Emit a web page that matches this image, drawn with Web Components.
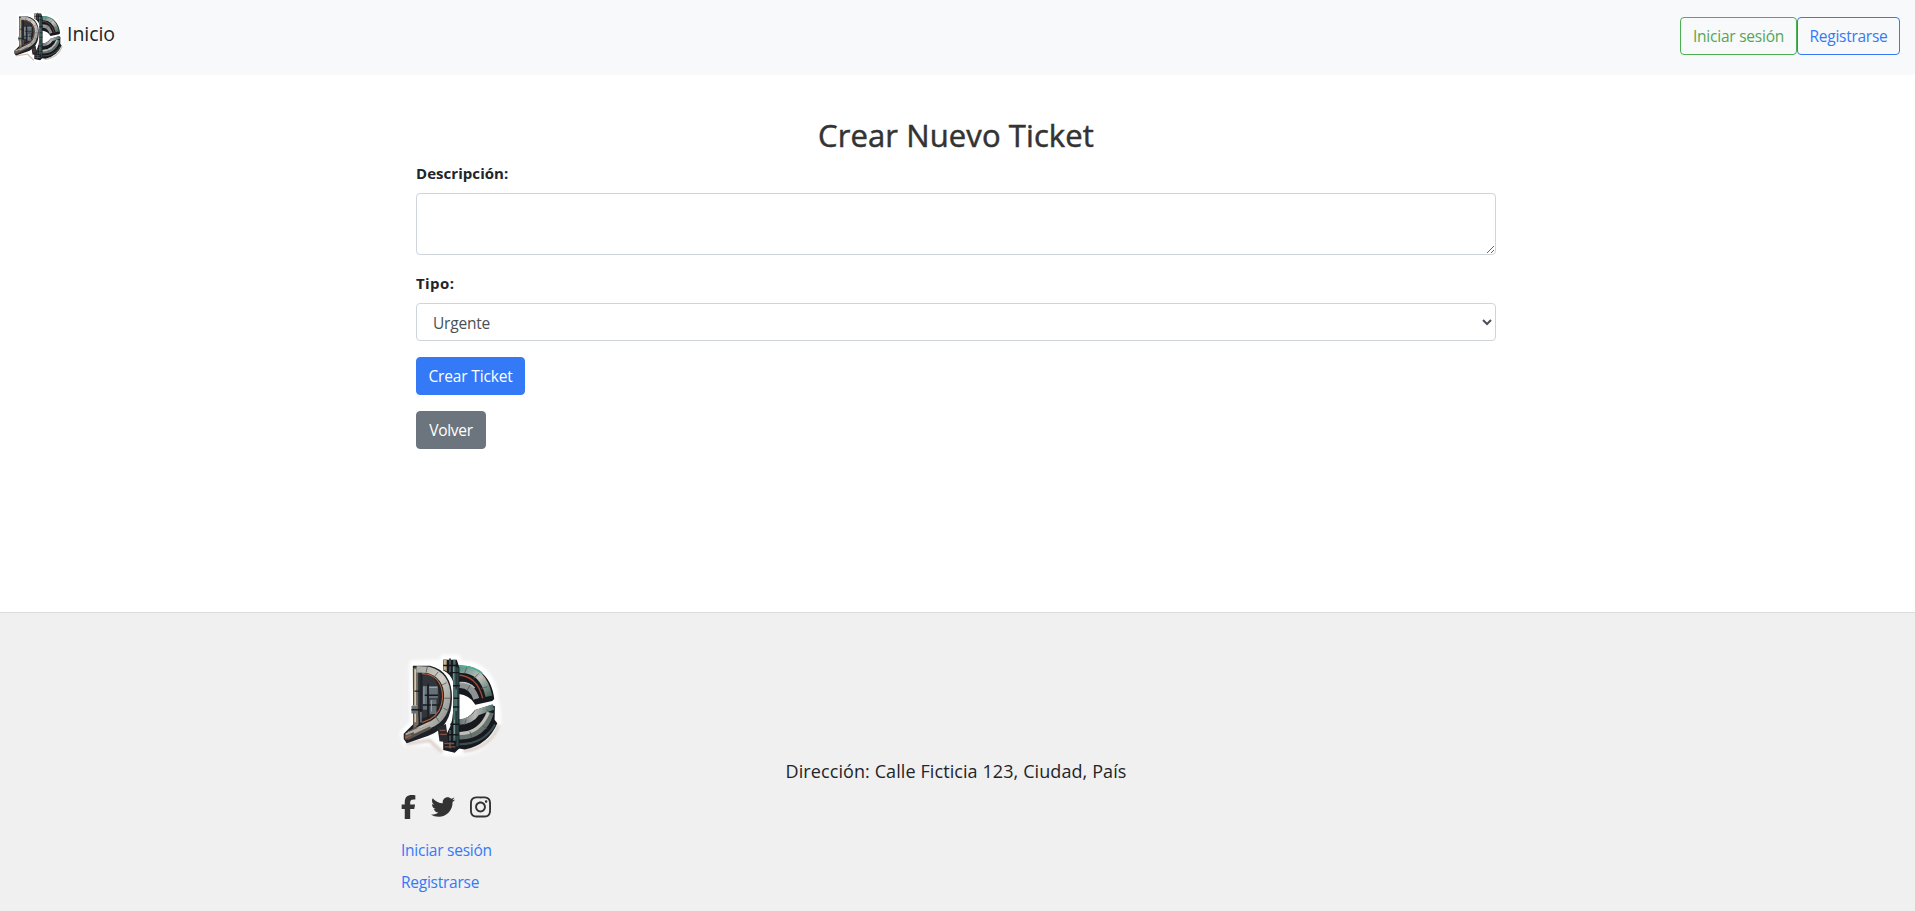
<!DOCTYPE html>
<html lang="es">
<head>
<meta charset="utf-8">
<title>Crear Nuevo Ticket</title>
<style>
body{margin:0;background:#fff;color:#212529;font:400 15.5px/24px "Open Sans","Noto Sans",sans-serif;overflow:hidden}
</style>
</head>
<body>
<ticket-page></ticket-page>
<script>
function define(name, html, setup) {
  customElements.define(name, class extends HTMLElement {
    constructor() {
      super();
      this.attachShadow({mode: "open"}).innerHTML = html;
    }
    connectedCallback() { if (setup) setup(this); }
  });
}

define("dc-logo", `
<style>:host{display:block;width:var(--size,100px);height:var(--size,100px);flex:none}svg{display:block;width:100%;height:100%;overflow:visible}</style>
<svg viewBox="20 30 296 296">
<defs>
<linearGradient id="steel" x1="0" y1="0" x2="1" y2="1"><stop offset="0" stop-color="#a3a49f"/><stop offset=".5" stop-color="#cfcdc6"/><stop offset="1" stop-color="#7c827f"/></linearGradient>
<linearGradient id="arc" x1="0" y1="0" x2="1" y2="1"><stop offset="0" stop-color="#5f9388"/><stop offset=".5" stop-color="#c2c3bc"/><stop offset="1" stop-color="#49695f"/></linearGradient>
<linearGradient id="low" x1="0" y1="0" x2="1" y2="0"><stop offset="0" stop-color="#59656a"/><stop offset=".5" stop-color="#b9b9b5"/><stop offset="1" stop-color="#466b66"/></linearGradient>
<filter id="soft" x="-20%" y="-20%" width="140%" height="140%"><feGaussianBlur stdDeviation="4"/></filter>
</defs>
<path d="M53 55L142 51L145 38H188L193 56C250 50 296 90 300 164L306 184L308 230C286 300 230 332 145 318L118 290L34 292L25 262L55 232Z" fill="#fff" stroke="#fff" stroke-width="17" stroke-linejoin="round" filter="url(#soft)"/>
<path d="M205 315Q285 305 309 237M36 293L105 283L142 318" fill="none" stroke="#a58b7d" stroke-width="8" opacity=".5" filter="url(#soft)"/>
<path d="M186 62C244 56 290 95 296 160L290 166L240 177Q226 150 188 145Z" fill="#17181d"/>
<path d="M189 74Q262 68 280 152" fill="none" stroke="url(#arc)" stroke-width="20"/>
<path d="M188 90Q244 90 262 158" fill="none" stroke="#a04a34" stroke-width="4"/>
<path d="M190 64Q232 60 260 84" fill="none" stroke="#53ad99" stroke-width="5"/>
<path d="M191 119Q229 117 243 160" fill="none" stroke="#8d9294" stroke-width="18"/>
<path d="M190 112Q220 108 238 128" fill="none" stroke="#c3c0ba" stroke-width="4"/>
<path d="M181 218Q212 229 239 193L288 178L298 182L297 222L305 232Q279 295 209 310L174 304Z" fill="#17191e"/>
<path d="M185 229Q226 230 246 200L277 189L294 184" fill="none" stroke="url(#low)" stroke-width="17"/>
<path d="M181 268Q260 276 284 200" fill="none" stroke="#66736f" stroke-width="22"/>
<path d="M184 262Q250 268 279 200" fill="none" stroke="#c0bfb9" stroke-width="9"/>
<path d="M184 294Q264 298 298 236" fill="none" stroke="#394f4d" stroke-width="6"/>
<path d="M55 62L106 62Q171 78 171 157Q170 244 101 269L37 291L28 279V263L56 235Z" fill="#202126"/>
<path d="M84 88Q128 83 134 151Q132 194 105 212L80 218Z" fill="#32343b"/>
<path d="M57 68L72 66V236L57 249Z" fill="#756b5d"/>
<path d="M62 72V229" stroke="#d7c9ab" stroke-width="5"/>
<path d="M74 77V214" stroke="#26313b" stroke-width="6"/>
<g fill="#657078"><path d="M85 122h12v70H85zM103 122h26v36h-26zM105 162h20v43h-20zM51 181h14v22H51z"/></g>
<g stroke="#17191d" stroke-width="4"><path d="M100 115V215M89 149H130M85 178H128M51 192H84M60 137H75"/></g>
<g stroke="#9aa4a7" stroke-width="3"><path d="M88 124V175M104 126H127M110 164V197M53 180H67M79 199V230"/></g>
<path d="M66 72L101 74Q157 90 157 152Q156 217 103 238L44 266" fill="none" stroke="url(#steel)" stroke-width="19"/>
<path d="M82 85L99 87Q143 100 143 155Q141 200 106 220L82 230" fill="none" stroke="#b5623f" stroke-width="3.5"/>
<path d="M145 44H185L193 68V306L179 319L145 311V276Q171 248 174 200L175 110Q165 84 145 76Z" fill="#191c22"/>
<path d="M145 43H156V79L145 74Z" fill="#958a72"/>
<path d="M150 45V74" stroke="#e1cc9c" stroke-width="4"/>
<path d="M165 40V82M165 252V307" stroke="#474c50" stroke-width="6"/>
<path d="M178 44V287" stroke="#487069" stroke-width="7"/>
<path d="M187 66V301" stroke="#2c4548" stroke-width="7"/>
<path d="M175 63V103M183 132V196M178 222V271" stroke="#72a092" stroke-width="3"/>
<g stroke="#15171b" stroke-width="4"><path d="M145 61H187M165 82H193M174 121H194M176 158H192M174 184H192M166 235H193M148 266H190M149 286H184"/></g>
<path d="M128 244L153 234L160 289L134 285Z" fill="#292a2f"/>
<path d="M134 253H151M136 265H156M148 292H177M149 302H181" stroke="#815342" stroke-width="4"/>
<path d="M31 265L61 243L79 247L103 237L110 248L43 281L31 280Z" fill="#555350"/>
<path d="M34 265L77 246M58 260L109 237" stroke="#b3aaa0" stroke-width="6"/>
<path d="M32 275L51 267" stroke="#9b5e44" stroke-width="5"/>
<g fill="none" stroke="#53595b" stroke-width="2.5"><path d="M98 65L94 82M130 80L119 94M155 112L141 119M166 158H148M161 195L145 187M133 228L122 211M215 66L208 84M250 85L235 100M276 124L257 129M225 118L216 134M213 221L208 236M273 190L291 210M224 256L230 276M262 240L274 248"/></g>
</svg>`);

const ICONS = {
  facebook: [320, "M80 299.3V512H196V299.3h86.5l18-97.8H196V166.9c0-51.7 20.3-71.5 72.7-71.5c16.3 0 29.4 .4 37 1.2V7.9C291.4 4 256.4 0 236.2 0C129.3 0 80 50.5 80 159.4v42.1H14v97.8H80z"],
  twitter: [512, "M459.37 151.716c.325 4.548.325 9.097.325 13.645 0 138.72-105.583 298.558-298.558 298.558-59.452 0-114.68-17.219-161.137-47.106 8.447.974 16.568 1.299 25.34 1.299 49.055 0 94.213-16.568 130.274-44.832-46.132-.975-84.792-31.188-98.112-72.772 6.498.974 12.995 1.624 19.818 1.624 9.421 0 18.843-1.3 27.614-3.573-48.081-9.747-84.143-51.98-84.143-102.985v-1.299c13.969 7.797 30.214 12.67 47.431 13.319-28.264-18.843-46.781-51.005-46.781-87.391 0-19.492 5.197-37.36 14.294-52.954 51.655 63.675 129.3 105.258 216.365 109.807-1.624-7.797-2.599-15.918-2.599-24.04 0-57.828 46.782-104.934 104.934-104.934 30.213 0 57.502 12.67 76.67 33.137 23.715-4.548 46.456-13.32 66.599-25.34-7.798 24.366-24.366 44.833-46.132 57.827 21.117-2.273 41.584-8.122 60.426-16.243-14.292 20.791-32.161 39.308-52.628 54.253z"],
  instagram: [448, "M224.1 141c-63.6 0-114.9 51.3-114.9 114.9s51.3 114.9 114.9 114.9S339 319.5 339 255.9 287.7 141 224.1 141zm0 189.6c-41.1 0-74.7-33.5-74.7-74.7s33.5-74.7 74.7-74.7 74.7 33.5 74.7 74.7-33.6 74.7-74.7 74.7zm146.4-194.3c0 14.9-12 26.8-26.8 26.8-14.9 0-26.8-12-26.8-26.8s12-26.8 26.8-26.8 26.8 12 26.8 26.8zm76.1 27.2c-1.7-35.9-9.9-67.7-36.2-93.9-26.2-26.2-58-34.4-93.9-36.2-37-2.1-147.9-2.1-184.9 0-35.8 1.7-67.6 9.9-93.9 36.1s-34.4 58-36.2 93.9c-2.1 37-2.1 147.9 0 184.9 1.7 35.9 9.9 67.7 36.2 93.9s58 34.4 93.9 36.2c37 2.1 147.9 2.1 184.9 0 35.9-1.7 67.7-9.9 93.9-36.2 26.2-26.2 34.4-58 36.2-93.9 2.1-37 2.1-147.8 0-184.8zM398.8 388c-7.8 19.6-22.9 34.7-42.6 42.6-29.5 11.7-99.5 9-132.1 9s-102.7 2.6-132.1-9c-19.6-7.8-34.7-22.9-42.6-42.6-11.7-29.5-9-99.5-9-132.1s-2.6-102.7 9-132.1c7.8-19.6 22.9-34.7 42.6-42.6 29.5-11.7 99.5-9 132.1-9s102.7-2.6 132.1 9c19.6 7.8 34.7 22.9 42.6 42.6 11.7 29.5 9 99.5 9 132.1s2.7 102.7-9 132.1z"]
};
define("social-icon", `<style>:host{display:block;height:24px}svg{display:block;height:24px;fill:#333}</style><svg><path/></svg>`, el => {
  const [w, d] = ICONS[el.getAttribute("name")];
  const svg = el.shadowRoot.querySelector("svg");
  svg.setAttribute("viewBox", `0 0 ${w} 512`);
  svg.setAttribute("width", w * 24 / 512);
  svg.firstElementChild.setAttribute("d", d);
});

define("app-button", `
<style>:host{display:block;box-sizing:border-box;height:38px;width:var(--w)}
button{box-sizing:border-box;width:100%;height:100%;padding:0;border:1px solid var(--line);border-radius:4px;background:var(--fill,transparent);color:var(--ink);font:inherit;letter-spacing:inherit;line-height:24px;white-space:nowrap;display:flex;align-items:center;justify-content:center}
:host([kind=success]){--line:#4caf50;--ink:#55a558}
:host([kind=outline]){--line:#347af7;--ink:#347af7}
:host([kind=primary]){--line:#347af7;--fill:#347af7;--ink:#fff}
:host([kind=secondary]){--line:#6c757d;--fill:#6c757d;--ink:#fff}</style>
<button><slot></slot></button>`);

define("app-navbar", `
<style>:host{display:flex;box-sizing:border-box;height:75px;padding:0 15px 0 12.5px;background:#f8f9fa;justify-content:space-between;align-items:center}
.brand{display:flex;align-items:center;gap:4px;font-size:19.5px;letter-spacing:-.05px;color:#212529}
dc-logo{--size:50.5px;margin-top:-2px}.brand span{margin-top:-8px}
nav{display:flex;margin-top:-3px}</style>
<div class="brand"><dc-logo></dc-logo><span>Inicio</span></div>
<nav><app-button kind="success" style="--w:117px;letter-spacing:-.22px">Iniciar sesión</app-button><app-button kind="outline" style="--w:103px;letter-spacing:-.27px">Registrarse</app-button></nav>`);

define("form-field", `
<style>:host{display:block;margin-bottom:16px}label{display:block;height:24px;margin-bottom:8px;font-weight:700;font-size:15px;letter-spacing:.05px}</style>
<label><slot name="label"></slot></label><slot></slot>`);

define("ticket-form", `
<style>:host{display:block;width:1080px;margin:0 auto;padding:40px 3px 0 0}
h2{margin:0 0 8px;height:38px;line-height:40px;font-size:31px;font-weight:500;-webkit-text-stroke:.5px #333;letter-spacing:.1px;text-align:center;color:#333}
textarea,select{display:block;box-sizing:border-box;width:100%;border:1px solid #ced4da;border-radius:4px;background:#fff;color:#495057;font:inherit;padding:6px 12px;margin:0}
textarea{height:62px}select{height:38px;letter-spacing:-.2px;padding:7px 13px 6px 12px}
app-button{margin-bottom:16px}</style>
<h2>Crear Nuevo Ticket</h2>
<form-field><span slot="label">Descripción:</span><textarea></textarea></form-field>
<form-field><span slot="label" style="letter-spacing:.4px">Tipo:</span><select><option>Urgente</option></select></form-field>
<app-button kind="primary" style="--w:109px;letter-spacing:-.15px">Crear Ticket</app-button>
<app-button kind="secondary" style="--w:70px;letter-spacing:-.3px">Volver</app-button>`);

define("app-footer", `
<style>:host{display:block;box-sizing:border-box;height:299px;background:#f0f0f0;border-top:1px solid #ddd}
.row{width:1110px;margin:0 auto;padding-right:3px;display:grid;grid-template-columns:repeat(3,1fr)}
.left{padding-top:42px}.icons{display:flex;gap:15px;margin:40px 0 19px}
a{display:block;color:#347af7;letter-spacing:-.25px;margin-bottom:8px;line-height:24px}
.address{padding-top:146px;display:flex;justify-content:center;white-space:nowrap;font-size:18px;letter-spacing:.09px}</style>
<div class="row"><div class="left"><dc-logo></dc-logo>
<div class="icons"><social-icon name="facebook"></social-icon><social-icon name="twitter"></social-icon><social-icon name="instagram"></social-icon></div>
<a>Iniciar sesión</a><a>Registrarse</a></div>
<div class="address">Dirección: Calle Ficticia 123, Ciudad, País</div></div>`);

define("ticket-page", `
<style>:host{display:flex;flex-direction:column;height:911px}main{flex:1}</style>
<app-navbar></app-navbar><main><ticket-form></ticket-form></main><app-footer></app-footer>`);
</script>
</body>
</html>
